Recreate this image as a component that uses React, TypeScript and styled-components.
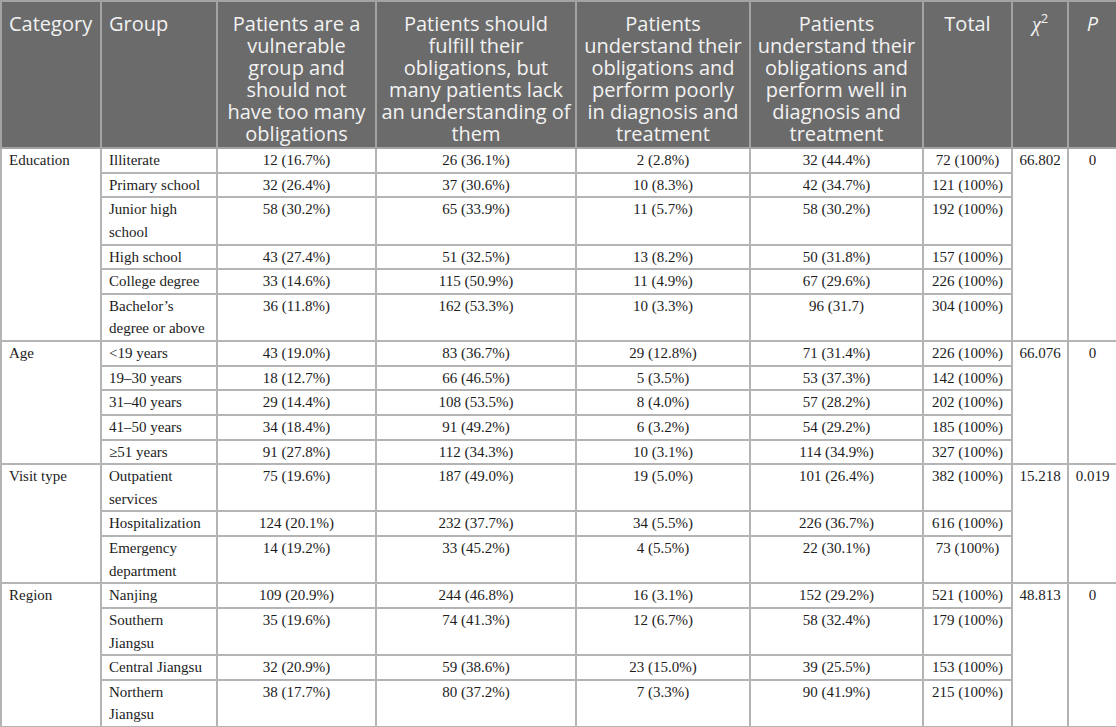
import React from "react";
import styled, { createGlobalStyle } from "styled-components";

const Global = createGlobalStyle`
  html, body { margin: 0; padding: 0; background: #ffffff; }
`;

const Table = styled.table`
  width: 1116px;
  border-collapse: collapse;
  table-layout: fixed;
  font-family: "Liberation Serif", "Times New Roman", serif;
  font-size: 15px;
  color: #1c1c1c;
`;

const HeadCell = styled.th<{ $left?: boolean }>`
  background: #6b6b6b;
  color: #f2f2f2;
  font-family: "Open Sans", "Liberation Sans", sans-serif;
  font-weight: 400;
  font-size: 20px;
  line-height: 22px;
  border: 2px solid #a3a3a3;
  padding: 11px 3px 2px;
  vertical-align: top;
  white-space: pre-line;
  text-align: ${(p) => (p.$left ? "left" : "center")};
  ${(p) => (p.$left ? "padding-left: 7px;" : "")}
`;

const Cell = styled.td<{ $left?: boolean }>`
  border: 2px solid #b4b4b4;
  padding: 0 6px;
  line-height: 22.625px;
  font-size: 15px;
  vertical-align: top;
  text-align: ${(p) => (p.$left ? "left" : "center")};
  ${(p) => (p.$left ? "padding-left: 7px;" : "")}
`;

const Ital = styled.i`
  font-family: "Liberation Serif", serif;
`;

const Sup = styled.sup`
  font-size: 13px;
  line-height: 0;
`;

type Row = [string, string, string, string, string, string];
type Group = { name: string; chi: string; p: string; rows: Row[] };

const groups: Group[] = [
  {
    name: "Education",
    chi: "66.802",
    p: "0",
    rows: [
      ["Illiterate", "12 (16.7%)", "26 (36.1%)", "2 (2.8%)", "32 (44.4%)", "72 (100%)"],
      ["Primary school", "32 (26.4%)", "37 (30.6%)", "10 (8.3%)", "42 (34.7%)", "121 (100%)"],
      ["Junior high school", "58 (30.2%)", "65 (33.9%)", "11 (5.7%)", "58 (30.2%)", "192 (100%)"],
      ["High school", "43 (27.4%)", "51 (32.5%)", "13 (8.2%)", "50 (31.8%)", "157 (100%)"],
      ["College degree", "33 (14.6%)", "115 (50.9%)", "11 (4.9%)", "67 (29.6%)", "226 (100%)"],
      ["Bachelor’s degree or above", "36 (11.8%)", "162 (53.3%)", "10 (3.3%)", "96 (31.7)", "304 (100%)"],
    ],
  },
  {
    name: "Age",
    chi: "66.076",
    p: "0",
    rows: [
      ["<19 years", "43 (19.0%)", "83 (36.7%)", "29 (12.8%)", "71 (31.4%)", "226 (100%)"],
      ["19–30 years", "18 (12.7%)", "66 (46.5%)", "5 (3.5%)", "53 (37.3%)", "142 (100%)"],
      ["31–40 years", "29 (14.4%)", "108 (53.5%)", "8 (4.0%)", "57 (28.2%)", "202 (100%)"],
      ["41–50 years", "34 (18.4%)", "91 (49.2%)", "6 (3.2%)", "54 (29.2%)", "185 (100%)"],
      ["≥51 years", "91 (27.8%)", "112 (34.3%)", "10 (3.1%)", "114 (34.9%)", "327 (100%)"],
    ],
  },
  {
    name: "Visit type",
    chi: "15.218",
    p: "0.019",
    rows: [
      ["Outpatient services", "75 (19.6%)", "187 (49.0%)", "19 (5.0%)", "101 (26.4%)", "382 (100%)"],
      ["Hospitalization", "124 (20.1%)", "232 (37.7%)", "34 (5.5%)", "226 (36.7%)", "616 (100%)"],
      ["Emergency department", "14 (19.2%)", "33 (45.2%)", "4 (5.5%)", "22 (30.1%)", "73 (100%)"],
    ],
  },
  {
    name: "Region",
    chi: "48.813",
    p: "0",
    rows: [
      ["Nanjing", "109 (20.9%)", "244 (46.8%)", "16 (3.1%)", "152 (29.2%)", "521 (100%)"],
      ["Southern Jiangsu", "35 (19.6%)", "74 (41.3%)", "12 (6.7%)", "58 (32.4%)", "179 (100%)"],
      ["Central Jiangsu", "32 (20.9%)", "59 (38.6%)", "23 (15.0%)", "39 (25.5%)", "153 (100%)"],
      ["Northern Jiangsu", "38 (17.7%)", "80 (37.2%)", "7 (3.3%)", "90 (41.9%)", "215 (100%)"],
    ],
  },
];

const headers: string[] = [
  "Patients are a\nvulnerable\ngroup and\nshould not\nhave too many\nobligations",
  "Patients should\nfulfill their\nobligations, but\nmany patients lack\nan understanding of\nthem",
  "Patients\nunderstand their\nobligations and\nperform poorly\nin diagnosis and\ntreatment",
  "Patients\nunderstand their\nobligations and\nperform well in\ndiagnosis and\ntreatment",
];

const widths = [100, 116, 159, 200, 174, 173, 89, 56, 49];

export default function App() {
  return (
    <>
      <Global />
      <Table>
        <colgroup>
          {widths.map((w, i) => (
            <col key={i} style={{ width: w }} />
          ))}
        </colgroup>
        <thead>
          <tr>
            <HeadCell $left>Category</HeadCell>
            <HeadCell $left>Group</HeadCell>
            {headers.map((h, i) => (
              <HeadCell key={i}>{h}</HeadCell>
            ))}
            <HeadCell>Total</HeadCell>
            <HeadCell>
              <Ital>χ</Ital>
              <Sup>2</Sup>
            </HeadCell>
            <HeadCell>
              <i>P</i>
            </HeadCell>
          </tr>
        </thead>
        <tbody>
          {groups.map((g) =>
            g.rows.map((r, i) => (
              <tr key={g.name + i}>
                {i === 0 && (
                  <Cell $left rowSpan={g.rows.length}>
                    {g.name}
                  </Cell>
                )}
                <Cell $left>{r[0]}</Cell>
                <Cell>{r[1]}</Cell>
                <Cell>{r[2]}</Cell>
                <Cell>{r[3]}</Cell>
                <Cell>{r[4]}</Cell>
                <Cell>{r[5]}</Cell>
                {i === 0 && <Cell rowSpan={g.rows.length}>{g.chi}</Cell>}
                {i === 0 && <Cell rowSpan={g.rows.length}>{g.p}</Cell>}
              </tr>
            ))
          )}
        </tbody>
      </Table>
    </>
  );
}
